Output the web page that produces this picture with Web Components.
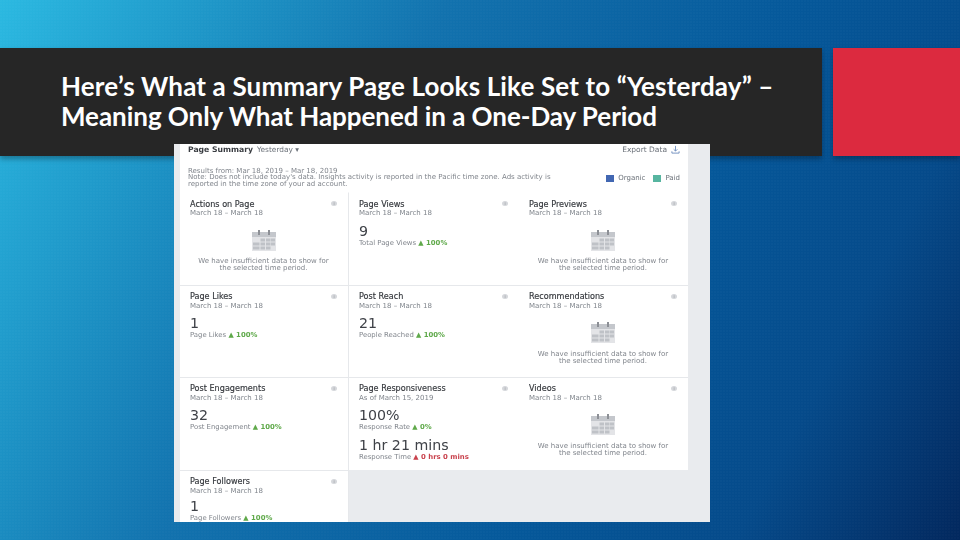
<!DOCTYPE html>
<html>
<head>
<meta charset="utf-8">
<style>
  html, body { margin: 0; padding: 0; }
  body { width: 960px; height: 540px; overflow: hidden; font-family: "Liberation Sans", sans-serif; }
</style>
</head>
<body>
<slide-page>
  <title-bar slot="head">Here’s What a Summary Page Looks Like Set to “Yesterday” – <span style="letter-spacing:-0.05px">Meaning Only What Happened in a One-Day Period</span></title-bar>
  <summary-shot>
    <metric-card first heading="Actions on Page" date="March 18 – March 18" divider><empty-note></empty-note></metric-card>
    <metric-card first heading="Page Views" date="March 18 – March 18">
      <metric-value value="9" label="Total Page Views" change="▲ 100%"></metric-value>
    </metric-card>
    <metric-card first heading="Page Previews" date="March 18 – March 18"><empty-note></empty-note></metric-card>

    <metric-card heading="Page Likes" date="March 18 – March 18" divider>
      <metric-value value="1" label="Page Likes" change="▲ 100%"></metric-value>
    </metric-card>
    <metric-card heading="Post Reach" date="March 18 – March 18">
      <metric-value value="21" label="People Reached" change="▲ 100%"></metric-value>
    </metric-card>
    <metric-card heading="Recommendations" date="March 18 – March 18"><empty-note></empty-note></metric-card>

    <metric-card heading="Post Engagements" date="March 18 – March 18" divider>
      <metric-value value="32" label="Post Engagement" change="▲ 100%"></metric-value>
    </metric-card>
    <metric-card heading="Page Responsiveness" date="As of March 15, 2019">
      <metric-value value="100%" label="Response Rate" change="▲ 0%"></metric-value>
      <metric-value value="1 hr 21 mins" label="Response Time" change="▲ 0 hrs 0 mins" bad></metric-value>
    </metric-card>
    <metric-card heading="Videos" date="March 18 – March 18"><empty-note></empty-note></metric-card>

    <metric-card heading="Page Followers" date="March 18 – March 18" divider>
      <metric-value compact value="1" label="Page Followers" change="▲ 100%"></metric-value>
    </metric-card>
  </summary-shot>
</slide-page>

<script>
class SlidePage extends HTMLElement {
  constructor() {
    super();
    this.attachShadow({ mode: 'open' });
    this.shadowRoot.innerHTML = `
      <style>
        :host {
          display: block;
          width: 960px;
          height: 540px;
          overflow: hidden;
          box-sizing: border-box;
          padding-top: 48px;
          background:
            radial-gradient(circle at 1px 1px, rgba(255,255,255,0.015) 1px, transparent 1px) 0 0 / 3px 3px,
            linear-gradient(118deg, #2bb9e1 0%, #1c91c4 20%, #1272ae 36%, #05589a 64%, #054a8a 82%, #02285e 100%);
        }
        .top { display: flex; gap: 11px; height: 108px; }
        .top ::slotted(title-bar) { flex: 0 0 822px; }
        .accent {
          flex: 1;
          background: #dc2a3f;
          box-shadow: 0 3px 5px rgba(0,0,0,0.3);
        }
        .body { margin: -12px 0 0 174px; position: relative; }
      </style>
      <div class="top"><slot name="head"></slot><div class="accent"></div></div>
      <div class="body"><slot></slot></div>
    `;
  }
}

class TitleBar extends HTMLElement {
  constructor() {
    super();
    this.attachShadow({ mode: 'open' });
    this.shadowRoot.innerHTML = `
      <style>
        :host {
          display: block;
          box-sizing: border-box;
          background: #262626;
          color: #fff;
          padding: 23px 30px 0 61px;
          font: 700 26px/30px Lato, "Liberation Sans", sans-serif;
          letter-spacing: 0.15px;
          box-shadow: 0 3px 5px rgba(0,0,0,0.3);
        }
      </style>
      <slot></slot>
    `;
  }
}

class SummaryShot extends HTMLElement {
  constructor() {
    super();
    this.attachShadow({ mode: 'open' });
    this.shadowRoot.innerHTML = `
      <style>
        :host {
          display: block;
          width: 536px;
          height: 378px;
          overflow: hidden;
          background: #e9ebee;
          color: #4b4f56;
          font-family: "DejaVu Sans", sans-serif;
          filter: blur(0.55px);
        }
        .panel { margin-left: 6px; width: 508px; }
        .head { height: 48px; box-sizing: border-box; padding: 0 8px; overflow: hidden; background: #fff; }
        .top { display: flex; align-items: center; height: 11px; }
        h2 { margin: 0; font-size: 7.7px; font-weight: 700; color: #3a3d42; }
        .range { margin-left: 4px; font-size: 7.4px; color: #6a7078; }
        .export { margin-left: auto; display: flex; align-items: center; gap: 4px; font-size: 7.5px; color: #6a7078; }
        .info { display: flex; margin-top: 12.5px; justify-content: space-between; }
        .notes { font-size: 7px; line-height: 6.8px; color: #80858c; height: 22px; white-space: nowrap; }
        .legend { display: flex; align-items: center; gap: 4px; font-size: 7px; color: #6a7078; height: 14px; margin-top: 3.5px; }
        .legend i { width: 8px; height: 7px; }
        .legend span { margin-right: 4px; }
        .legend span:last-child { margin-right: 0; }
        .grid {
          display: grid;
          grid-template-columns: 169px 170px 169px;
          grid-template-rows: 93px 92px 93px 52px;
        }
      </style>
      <div class="panel">
        <div class="head">
          <div class="top">
            <h2>Page Summary</h2><span class="range">Yesterday ▾</span>
            <span class="export">Export Data
              <svg width="9" height="9" viewBox="0 0 10 10" fill="none" stroke="#5b7fb5" stroke-width="0.9"><path d="M5 1v5.5M3 4.8l2 2 2-2M1 7v2h8V7"/></svg>
            </span>
          </div>
          <div class="info">
            <div class="notes">Results from: Mar 18, 2019 – Mar 18, 2019<br>Note: Does not include today's data. Insights activity is reported in the Pacific time zone. Ads activity is<br>reported in the time zone of your ad account.</div>
            <div class="legend"><i style="background:#4267b2"></i><span>Organic</span><i style="background:#57b5a0"></i><span>Paid</span></div>
          </div>
        </div>
        <div class="grid"><slot></slot></div>
      </div>
    `;
  }
}

class MetricCard extends HTMLElement {
  constructor() {
    super();
    this.attachShadow({ mode: 'open' });
    this.shadowRoot.innerHTML = `
      <style>
        :host {
          display: block;
          box-sizing: border-box;
          padding: 6px 11px 0 10px;
          border-top: 1px solid #e6e8eb;
          background: #fff;
          overflow: hidden;
        }
        :host([first]) { border-top-color: #fff; padding-top: 6.5px; }
        :host([divider]) { border-right: 1px solid #e6e8eb; }
        .row { display: flex; justify-content: space-between; align-items: center; height: 8px; white-space: nowrap; }
        .name { font-size: 8.1px; color: #33363b; -webkit-text-stroke: 0.15px #33363b; }
        .i {
          width: 6px; height: 5px; border-radius: 50%;
          background: #d5d7db; color: #8a8d92; font-size: 4px; line-height: 5px; text-align: center;
        }
        .date { font-size: 7px; color: #7f848b; line-height: 9px; margin-top: 1.5px; white-space: nowrap; }
      </style>
      <div class="row"><span class="name"></span><span class="i">i</span></div>
      <div class="date"></div>
      <slot></slot>
    `;
    this.shadowRoot.querySelector('.name').textContent = this.getAttribute('heading');
    this.shadowRoot.querySelector('.date').textContent = this.getAttribute('date');
  }
}

class MetricValue extends HTMLElement {
  constructor() {
    super();
    this.attachShadow({ mode: 'open' });
    const bad = this.hasAttribute('bad');
    this.shadowRoot.innerHTML = `
      <style>
        :host { display: block; padding-top: 5.5px; margin-bottom: 1px; }
        :host([compact]) { padding-top: 3.5px; }
        .v { font-size: 14.2px; line-height: 14px; color: #3f4248; white-space: nowrap; }
        .l { font-size: 6.9px; line-height: 7px; margin-top: 2px; color: #80858c; white-space: nowrap; }
        .c { font-weight: 700; color: ${bad ? '#c9424d' : '#5fa94a'}; }
      </style>
      <div class="v">${this.getAttribute('value')}</div>
      <div class="l">${this.getAttribute('label')} <span class="c">${this.getAttribute('change')}</span></div>
    `;
  }
}

class EmptyNote extends HTMLElement {
  constructor() {
    super();
    this.attachShadow({ mode: 'open' });
    this.shadowRoot.innerHTML = `
      <style>
        :host { display: block; text-align: center; padding-top: 11.5px; font-size: 7px; line-height: 7.4px; color: #80858c; white-space: nowrap; }
        svg { display: block; margin: 0 auto 7.5px; }
      </style>
      <svg width="24" height="21" viewBox="0 0 24 21">
        <rect x="0" y="2" width="24" height="5" fill="#c4c7cc"/>
        <rect x="0" y="7" width="24" height="14" fill="#e3e4e7"/>
        <rect x="6" y="0" width="2" height="5" fill="#8d9096"/>
        <rect x="16" y="0" width="2" height="5" fill="#8d9096"/>
        <g fill="#bfc2c7">
          <rect x="8.5" y="8.5" width="4.5" height="3"/><rect x="14" y="8.5" width="4.5" height="3"/><rect x="19" y="8.5" width="4" height="3"/>
          <rect x="1" y="12.5" width="6.5" height="3"/><rect x="8.5" y="12.5" width="4.5" height="3"/><rect x="14" y="12.5" width="4.5" height="3"/><rect x="19" y="12.5" width="4" height="3"/>
          <rect x="1" y="16.5" width="6.5" height="3"/><rect x="8.5" y="16.5" width="4.5" height="3"/><rect x="14" y="16.5" width="4.5" height="3"/>
        </g>
      </svg>
      We have insufficient data to show for<br>the selected time period.
    `;
  }
}

customElements.define('slide-page', SlidePage);
customElements.define('title-bar', TitleBar);
customElements.define('summary-shot', SummaryShot);
customElements.define('metric-card', MetricCard);
customElements.define('metric-value', MetricValue);
customElements.define('empty-note', EmptyNote);
</script>
</body>
</html>
